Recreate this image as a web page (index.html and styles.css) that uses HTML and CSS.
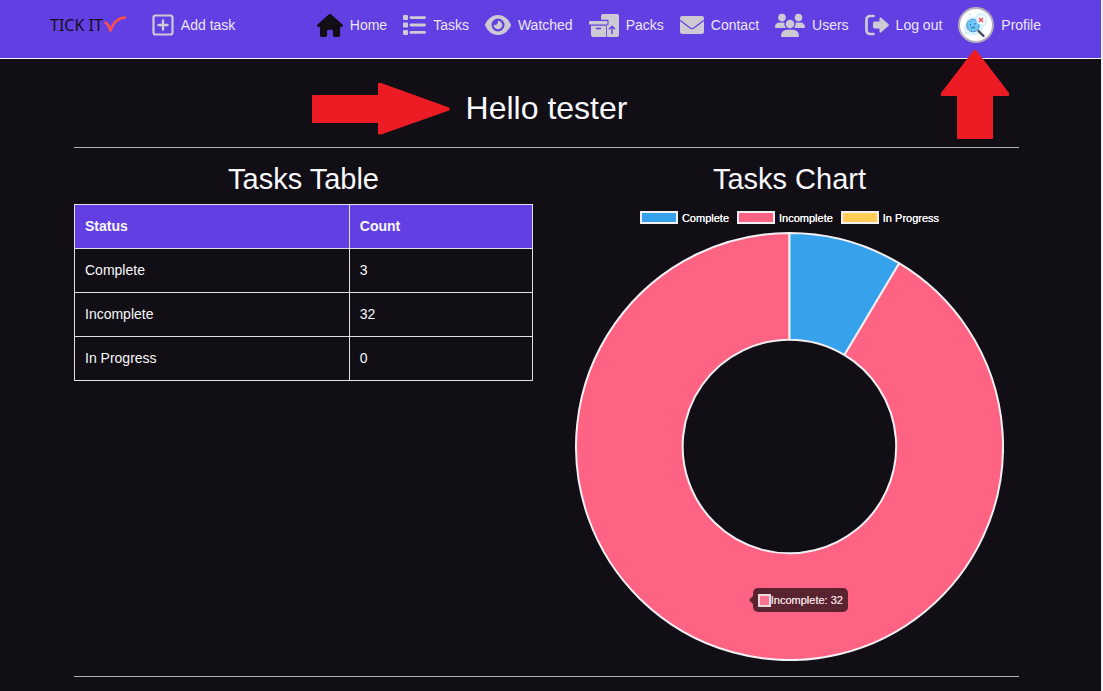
FILE: index.html
```html
<!DOCTYPE html>
<html lang="en">
<head>
<meta charset="utf-8">
<meta name="viewport" content="width=device-width, initial-scale=1">
<title>Tick It - Profile</title>
<link rel="stylesheet" href="styles.css">
</head>
<body>
<header class="site-header">
  <a class="logo" href="#">TICK IT<svg class="logo-check" width="22" height="18" viewBox="0 0 22 18" aria-hidden="true"><path d="M1.600 6.600C4 8 5 10 6.400 14.600C9 7.500 13 1.900 21 1.600" fill="none" stroke="#ff4f4b" stroke-width="2.500" stroke-linecap="round" stroke-linejoin="round"/></svg></a>
  <a class="nav-link" href="#"><svg width="22" height="22" viewBox="0 0 22 22" aria-hidden="true"><rect x="1.500" y="1.500" width="19" height="19" rx="2" fill="none" stroke="currentColor" stroke-width="2.200"/><path d="M11 6.500v9M6.500 11h9" stroke="currentColor" stroke-width="2.400" stroke-linecap="round"/></svg><span>Add task</span></a>
  <nav class="main-nav">
    <a class="nav-link" href="#"><svg class="active" width="26" height="23" viewBox="0 0 576 512" aria-hidden="true"><path fill="currentColor" d="M575.8 255.5c0 18-15 32.1-32 32.1h-32l.7 160.2c0 2.7-.2 5.4-.5 8.1V472c0 22.1-17.9 40-40 40H456c-1.1 0-2.2 0-3.3-.1c-1.4 .1-2.8 .1-4.2 .1H416 392c-22.1 0-40-17.9-40-40V448 384c0-17.7-14.3-32-32-32H256c-17.7 0-32 14.3-32 32v64 24c0 22.1-17.9 40-40 40H160 128.1c-1.500 0-3-.1-4.500-.2c-1.200 .1-2.400 .2-3.600 .2H104c-22.1 0-40-17.900-40-40V360c0-.9 0-1.900 .1-2.800V287.600H32c-18 0-32-14-32-32.100c0-9 3-17 10-24L266.400 8c7-7 15-8 22-8s15 2 21 7L564.800 231.500c8 7 12 15 11 24z"/></svg><span>Home</span></a>
    <a class="nav-link" href="#"><svg width="23" height="20" viewBox="0 0 23 20" aria-hidden="true"><g fill="currentColor"><rect width="5" height="5" rx="1"/><rect y="7.500" width="5" height="5" rx="1"/><rect y="15" width="5" height="5" rx="1"/><rect x="6.500" y="1.200" width="16.500" height="2.800" rx="1.400"/><rect x="6.500" y="8.600" width="16.500" height="2.800" rx="1.400"/><rect x="6.500" y="16" width="16.500" height="2.800" rx="1.400"/></g></svg><span>Tasks</span></a>
    <a class="nav-link" href="#"><svg width="26" height="24" viewBox="0 0 576 512" aria-hidden="true"><path fill="currentColor" d="M288 32c-80.800 0-145.500 36.800-192.600 80.600C48.600 156 17.300 208 2.500 243.700c-3.300 7.900-3.300 16.700 0 24.600C17.300 304 48.600 356 95.400 399.400C142.500 443.200 207.200 480 288 480s145.500-36.800 192.600-80.600c46.800-43.500 78.100-95.400 93-131.100c3.300-7.900 3.300-16.700 0-24.600c-14.900-35.700-46.200-87.700-93-131.100C433.500 68.800 368.800 32 288 32zM144 256a144 144 0 1 1 288 0 144 144 0 1 1 -288 0zm144-64c0 35.300-28.700 64-64 64c-7.100 0-13.900-1.200-20.300-3.300c-5.500-1.800-11.900 1.600-11.700 7.400c.3 6.900 1.300 13.800 3.200 20.700c13.700 51.200 66.400 81.600 117.600 67.900s81.600-66.400 67.900-117.600c-11.100-41.500-47.800-69.400-88.600-71.100c-5.800-.2-9.200 6.100-7.400 11.700c2.100 6.400 3.300 13.200 3.300 20.300z"/></svg><span>Watched</span></a>
    <a class="nav-link" href="#"><svg width="30" height="24" viewBox="0 0 30 24" aria-hidden="true"><rect x="12" y="1" width="18" height="23" rx="2" fill="currentColor"/><path d="M11 6.800h7.500q1 0 1 1V12h-1.700v12H11z" fill="#623fe2"/><g fill="currentColor"><rect x="0" y="8" width="18.500" height="3.600" rx=".8"/><path d="M2 12.800h15V24H4q-2 0-2-2z"/></g><path d="M7 15.500h5M23 21v-7.500M20 16.300l3-3 3 3" fill="none" stroke="#623fe2" stroke-width="1.400"/></svg><span>Packs</span></a>
    <a class="nav-link" href="#"><svg width="24" height="18" viewBox="0 0 24 18" aria-hidden="true"><rect width="24" height="18" rx="2.200" fill="currentColor"/><path d="M0 4.200 9.800 11.800q2.200 1.500 4.400 0L24 4.200" fill="none" stroke="#623fe2" stroke-width="1.200"/></svg><span>Contact</span></a>
    <a class="nav-link" href="#"><svg width="30" height="24" viewBox="0 0 30 24" aria-hidden="true"><g fill="currentColor"><circle cx="7" cy="4.600" r="3.800"/><circle cx="23.500" cy="4.600" r="3.800"/><circle cx="15" cy="11" r="4.300"/><path d="M0 14q0-4.200 5-4.400h4.400q-.6 3.200 1.400 5.400H1q-1 0-1-1zM30 14q-.2-4.300-5-4.400h-4.400q.6 3.200-1.400 5.400H29q1 0 1-1zM6 23q.4-6 6-6.200h6q5.600.2 6 6.200 0 1-1 1H7q-1 0-1-1z"/></g></svg><span>Users</span></a>
    <a class="nav-link" href="#"><svg width="24" height="22" viewBox="0 0 24 22" aria-hidden="true"><path d="M8.500 2H5.500Q1.500 2 1.500 6v10q0 4 4 4h3" fill="none" stroke="currentColor" stroke-width="2.700" stroke-linecap="round"/><path d="M8 9q0-1.500 1.500-1.500h5V4.600q0-1.400 1.400-1.200l7.500 6.700q.9.900 0 1.800l-7.500 6.700q-1.400.2-1.400-1.200v-2.900h-5Q8 14.500 8 13z" fill="currentColor"/></svg><span>Log out</span></a>
    <a class="nav-link" href="#"><svg width="36" height="36" viewBox="0 0 36 36" aria-hidden="true"><circle cx="18" cy="18" r="17" fill="#fff" stroke="#b3acb9" stroke-width="2"/><path d="M9 12q4-4 9-2 0-4 5-4.500 6 0 6 6 1 5-3 8-3 9-11 9-9 0-9-8z" fill="#d8f3fb"/><path d="m20.500 24 5 5" stroke="#3f4a5b" stroke-width="2.400" stroke-linecap="round"/><circle cx="15" cy="18.500" r="6.300" fill="#6dc5fa" stroke="#5c93bf"/><path d="M12.500 17v1.500M17 16v1.500" stroke="#31618c"/><path d="M13 21.500q2-2 4-1" fill="none" stroke="#31618c"/><circle cx="23" cy="13" r="4.500" fill="#f4fafc"/><path d="m21 11 4 4m0-4-4 4" stroke="#e44f59" stroke-width="1.400"/><circle cx="12" cy="7.500" r=".8" fill="#8ed8ef"/><circle cx="8" cy="26" r=".8" fill="#8ed8ef"/></svg><span>Profile</span></a>
  </nav>
</header>

<main class="page">
  <div class="greeting">
    <h1 class="greeting-text">Hello tester</h1>
  </div>
  <div class="columns">
    <section class="column">
      <h2 class="section-title">Tasks Table</h2>
      <table class="task-table">
        <thead><tr><th scope="col" class="status-col">Status</th><th scope="col">Count</th></tr></thead>
        <tbody>
          <tr><td>Complete</td><td>3</td></tr>
          <tr><td>Incomplete</td><td>32</td></tr>
          <tr><td>In Progress</td><td>0</td></tr>
        </tbody>
      </table>
    </section>
    <section class="column">
      <h2 class="section-title">Tasks Chart</h2>
      <ul class="legend">
        <li class="legend-item"><span class="swatch complete"></span>Complete</li>
        <li class="legend-item"><span class="swatch incomplete"></span>Incomplete</li>
        <li class="legend-item"><span class="swatch progress"></span>In Progress</li>
      </ul>
      <div class="chart">
        <svg class="doughnut" viewBox="0 0 430 430" role="img" aria-label="Complete 3, Incomplete 32, In Progress 0">
          <g stroke="#f3f0f3" stroke-width="2" stroke-linejoin="bevel">
            <path fill="#ff6384" d="M324.800 31.300A214 214 0 1 1 215 1V108A107 107 0 1 0 269.900 123.200Z"/>
            <path fill="#36a2eb" d="M215 1A214 214 0 0 1 324.800 31.300L269.900 123.200A107 107 0 0 0 215 108Z"/>
          </g>
        </svg>
        <div class="tooltip"><span class="tooltip-swatch"></span>Incomplete: 32</div>
      </div>
    </section>
  </div>
</main>

<svg class="pointer pointer-right" width="139" height="53" viewBox="0 0 139 53" aria-hidden="true"><path d="M1.500 13.500H67.500V1.500L70 1.500 138 26V28L70 52H67.500V40.500H1.500Z" fill="#ed1c24" stroke="#ed1c24" stroke-linejoin="round"/></svg>
<svg class="pointer pointer-up" width="70" height="91" viewBox="0 0 70 91" aria-hidden="true"><path d="M34 1.500H36L68.500 44V46.500H52.500V89.500H17.500V46.500H1.500V44Z" fill="#ed1c24" stroke="#ed1c24" stroke-linejoin="round"/></svg>
</body>
</html>
```
FILE: styles.css
```css
* { box-sizing: border-box; }

html { background: #f0f0f0; }

body {
  position: relative;
  min-height: 100vh;
  margin: 0 2px 0 0;
  background: #110e15;
  color: #f8f8fa;
  font-family: "Liberation Sans", Arial, sans-serif;
  font-size: 14px;
}

a { color: inherit; text-decoration: none; }
svg { display: block; flex-shrink: 0; }

.site-header {
  display: flex;
  align-items: center;
  padding: 7px 60px 15px 50px;
  background: #623fe2;
  border-bottom: 1px solid #f8f8fa;
  white-space: nowrap;
}

.logo {
  display: flex;
  align-items: center;
  gap: 1px;
  margin-right: 26px;
  color: #110e15;
  font-family: "Noto Sans", sans-serif;
  font-size: 16px;
  line-height: 20px;
}

.nav-link {
  display: flex;
  align-items: center;
  gap: 7px;
  color: #ebe6fb;
  line-height: 16px;
}

.nav-link svg { color: #cdcad4; }
.nav-link svg.active { color: #110e15; }

.main-nav {
  display: flex;
  align-items: center;
  gap: 16px;
  margin-left: auto;
}

.page { padding: 0 82px 13px 74px; }

.greeting {
  padding: 30px 0 20px;
  border-bottom: 1px solid #b3b2b6;
  text-align: center;
}

.greeting-text, .section-title { margin: 0; font-weight: 400; }
.greeting-text { font-size: 32px; line-height: 38px; }

.section-title {
  font-size: 29px;
  line-height: 34px;
  text-align: center;
}

.columns {
  display: grid;
  grid-template-columns: 1fr 1fr;
  gap: 27px;
  padding: 14px 0 15px;
  border-bottom: 1px solid #b3b2b6;
}

.task-table {
  width: 100%;
  margin-top: 8px;
  border-collapse: collapse;
  line-height: 23px;
}

.task-table th, .task-table td {
  padding: 10px;
  border: 1px solid #dfe1e5;
  text-align: left;
}

.task-table th { background: #623fe2; }
.status-col { width: 60%; }

.legend {
  display: flex;
  justify-content: center;
  gap: 8px;
  margin: 15px 0 8px;
  padding: 0;
  list-style: none;
  font-size: 11px;
  line-height: 12px;
}

.legend-item {
  display: flex;
  align-items: center;
  gap: 4px;
  text-shadow: 0 0 0 #f8f8fa;
}

.swatch {
  width: 38px;
  height: 13px;
  border: 2px solid #f3f0f3;
}

.complete { background: #36a2eb; }
.incomplete { background: #ff6384; }
.progress { background: #ffcd56; }

.chart { position: relative; padding: 0 15px; }
.doughnut { width: 100%; height: auto; }

.tooltip {
  position: absolute;
  left: 42%;
  top: 83%;
  display: flex;
  align-items: center;
  padding: 5px;
  border-radius: 5px;
  background: #59232f;
  color: #ead9df;
  font-size: 11px;
  line-height: 14px;
  text-shadow: 0 0 0 #ead9df;
  white-space: nowrap;
}

.tooltip::before {
  content: "";
  position: absolute;
  right: 100%;
  top: 8px;
  border: 4px solid transparent;
  border-left: 0;
  border-right-color: #59232f;
}

.tooltip-swatch {
  width: 13px;
  height: 13px;
  border: 2px solid #ead9df;
  background: #fb7590;
}

.pointer { position: absolute; }
.pointer-right { left: 311px; top: 82px; }
.pointer-up { left: 940px; top: 49px; }
```
